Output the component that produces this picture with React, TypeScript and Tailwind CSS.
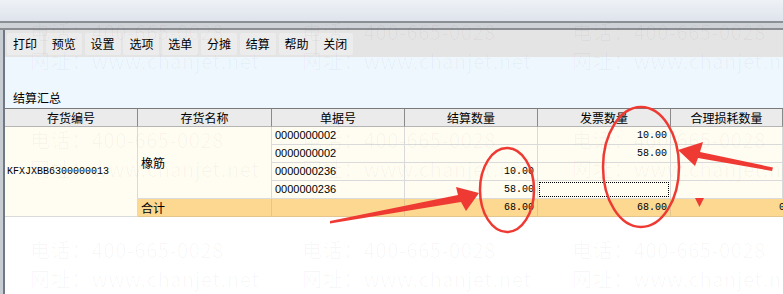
import React from "react";

const CJK = "font-['Noto_Sans_CJK_SC','Noto_Sans',sans-serif]";
const MONO = "font-['Liberation_Mono',monospace]";
const SANS = "font-['Liberation_Sans',Arial,sans-serif]";

const tools = ["打印", "预览", "设置", "选项", "选单", "分摊", "结算", "帮助", "关闭"];

function Watermark() {
  const xs = [30, 302, 572];
  const ys = [32, 140, 250];
  return (
    <div className="pointer-events-none absolute inset-0">
      {ys.map((y) =>
        xs.map((x) => (
          <div
            key={`${x}-${y}`}
            className={`absolute ${CJK} text-[20px] leading-[20px] text-[rgba(0,0,0,0.03)] whitespace-nowrap tracking-[0.6px]`}
            style={{ left: x, top: y - 10 }}
          >
            <div>电话：400-665-0028</div>
            <div className="mt-[9px]">网址：www.chanjet.net</div>
          </div>
        ))
      )}
    </div>
  );
}

function Annotations() {
  const red = "#ee3a33";
  return (
    <svg className="pointer-events-none absolute inset-0" width={783} height={294} viewBox="0 0 783 294">
      <ellipse cx={507} cy={190} rx={27} ry={42} fill="none" stroke={red} strokeWidth={2.5} />
      <ellipse cx={641} cy={167} rx={38} ry={60} fill="none" stroke={red} strokeWidth={2.5} />
      <polygon
        points="330,221 458,195 456,187 479,193 466,211 461,202 330,223.5"
        fill={red}
      />
      <polygon
        points="678,150 703,142 700,152 773,167.5 772,171 698,158 695,166"
        fill={red}
      />
      <polygon points="695,198 704,198 699.5,207" fill={red} />
    </svg>
  );
}

export default function App() {
  const cell = "border-r border-b border-[#dadada] bg-[#fffcf2] overflow-hidden whitespace-nowrap";
  const hdr = `border-r border-b border-r-[#8a8a8a] border-b-[#b5b5b5] bg-[#ebebeb] flex items-center justify-center ${CJK} text-[12px] text-black`;
  const docs = ["0000000002", "0000000002", "0000000236", "0000000236"];
  const settle = ["", "", "10.00", "58.00"];
  const invoice = ["10.00", "58.00", "", ""];
  return (
    <div className="relative w-[783px] h-[294px] overflow-hidden bg-white">
      <div className="h-[21px] bg-gradient-to-b from-[#eef1f6] to-[#dfe4ec]" />
      <div className="h-[9px] flex flex-col">
        <div className="h-[2px] bg-[#8a9096]" />
        <div className="flex-1 bg-[#cfd2d6]" />
        <div className="h-[2px] bg-[#8b8f94]" />
      </div>
      <div className="flex h-[264px]">
        <div className="w-[3px] bg-[#c8cdd4]" />
        <div className="w-[2px] bg-[#6f7884]" />
        <div className="flex-1 flex flex-col">
          <div className="h-[27px] bg-[#e4e4e4] flex items-center pl-[2px] gap-[2.8px]">
            {tools.map((t) => (
              <div
                key={t}
                className={`w-[36px] h-[22px] rounded-[2px] bg-[#ececec] flex items-center justify-center ${CJK} text-[12px] text-black`}
              >
                {t}
              </div>
            ))}
          </div>
          <div className="h-[51px] bg-[#eef6fe] flex items-end pl-[8px] pb-[2px]">
            <span className={`${CJK} text-[12px] leading-[16px] text-black`}>结算汇总</span>
          </div>
          <div className="border-t border-[#7a7a7a]">
            <div className="grid grid-cols-[133px_134px_133px_133px_133px_112px] grid-rows-[18px_18px_18px_18px_18px_18px]">
              <div className={`${hdr} col-start-1 row-start-1`}>存货编号</div>
              <div className={`${hdr} col-start-2 row-start-1`}>存货名称</div>
              <div className={`${hdr} col-start-3 row-start-1`}>单据号</div>
              <div className={`${hdr} col-start-4 row-start-1`}>结算数量</div>
              <div className={`${hdr} col-start-5 row-start-1`}>发票数量</div>
              <div className={`${hdr} col-start-6 row-start-1`}>合理损耗数量</div>

              <div className={`${cell} col-start-1 row-start-2 row-span-5 flex items-center pl-[2px] ${MONO} text-[10px] text-black`}>
                KFXJXBB6300000013
              </div>
              <div className={`${cell} col-start-2 row-start-2 row-span-4 flex items-center pl-[3px] ${CJK} text-[12px] text-black`}>
                橡筋
              </div>
              <div className={`border-r border-b border-[#e3c68d] bg-[#fdd890] col-start-2 row-start-6 flex items-center pl-[3px] ${CJK} text-[12px] text-black`}>
                合计
              </div>

              {docs.map((d, i) => (
                <React.Fragment key={i}>
                  <div
                    className={`${cell} col-start-3 flex items-center pl-[3px] ${SANS} text-[11px] text-black`}
                    style={{ gridRowStart: i + 2 }}
                  >
                    {d}
                  </div>
                  <div
                    className={`${cell} col-start-4 flex items-center justify-end pr-[3px] ${MONO} text-[10px] text-black`}
                    style={{ gridRowStart: i + 2 }}
                  >
                    {settle[i]}
                  </div>
                  <div
                    className={`${cell} col-start-5 flex items-center justify-end ${MONO} text-[10px] text-black p-[1px]`}
                    style={{ gridRowStart: i + 2 }}
                  >
                    {i === 3 ? (
                      <div className="w-full h-full border border-dotted border-black" />
                    ) : (
                      <span className="pr-[2px]">{invoice[i]}</span>
                    )}
                  </div>
                  <div
                    className={`${cell} col-start-6`}
                    style={{ gridRowStart: i + 2 }}
                  />
                </React.Fragment>
              ))}

              <div className="border-r border-b border-[#e3c68d] bg-[#fdd890] col-start-3 row-start-6" />
              <div className={`border-r border-b border-[#e3c68d] bg-[#fdd890] col-start-4 row-start-6 flex items-center justify-end pr-[3px] ${MONO} text-[10px] text-black`}>
                68.00
              </div>
              <div className={`border-r border-b border-[#e3c68d] bg-[#fdd890] col-start-5 row-start-6 flex items-center justify-end pr-[3px] ${MONO} text-[10px] text-black`}>
                68.00
              </div>
              <div className={`border-b border-[#e3c68d] bg-[#fdd890] col-start-6 row-start-6 flex items-center justify-end pr-0 ${MONO} text-[10px] text-black overflow-hidden`}>
                <span className="translate-x-[2px]">0</span>
              </div>
            </div>
          </div>
          <div className="flex-1 bg-white" />
        </div>
      </div>
      <Watermark />
      <Annotations />
    </div>
  );
}
